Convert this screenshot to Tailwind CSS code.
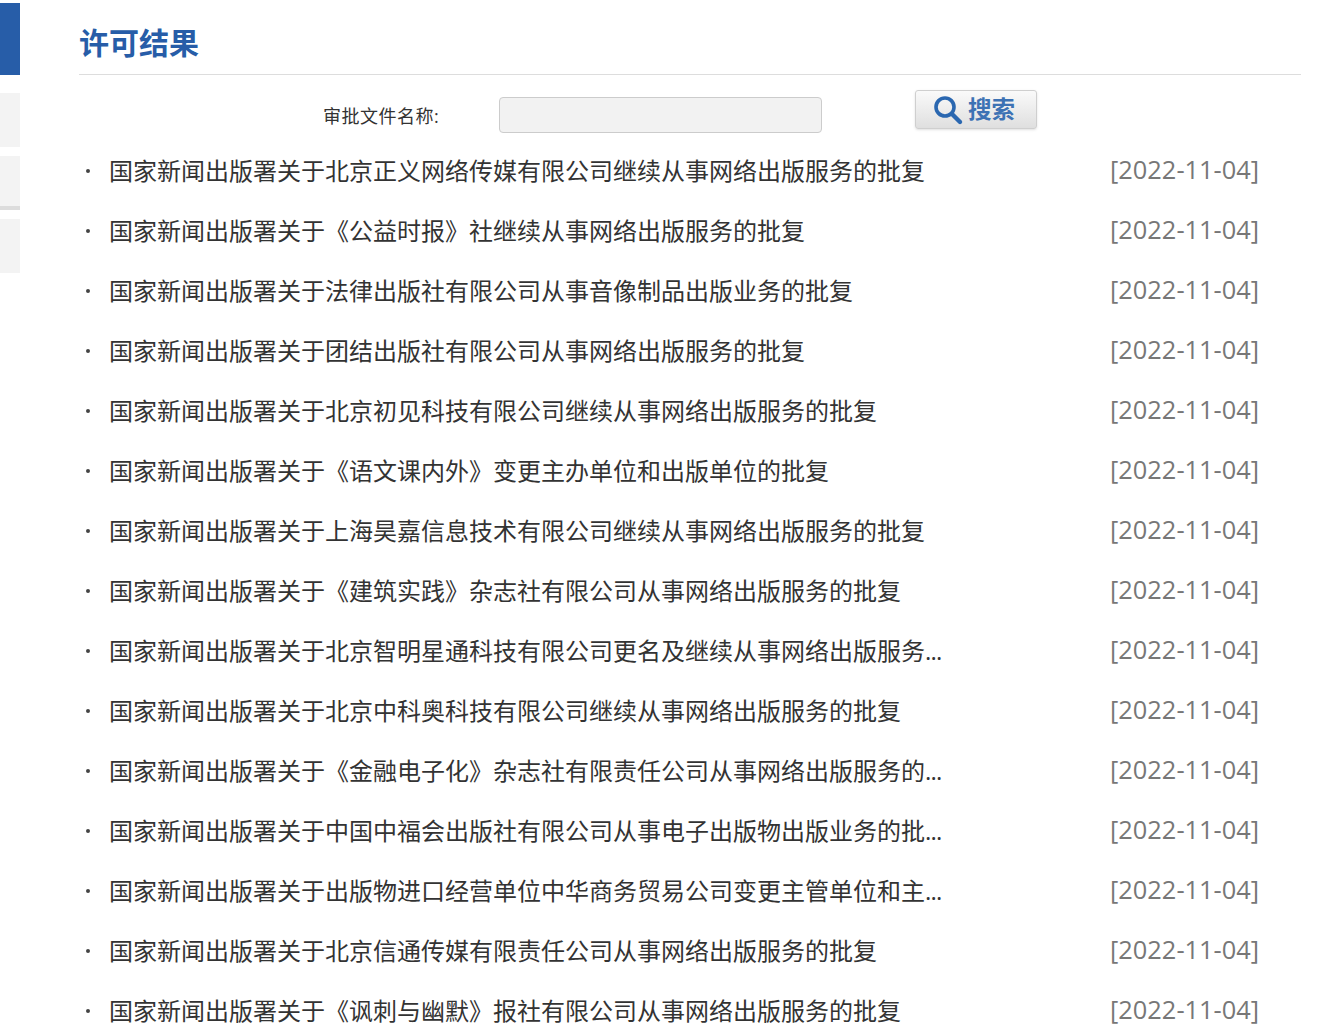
<!DOCTYPE html>
<html lang="zh-CN">
<head>
  <meta charset="UTF-8" />
  <title>许可结果</title>
  <script src="https://cdn.jsdelivr.net/npm/@tailwindcss/browser@4"></script>
</head>
<body class="bg-white h-[1036px] overflow-hidden font-['Open_Sans','Noto_Sans_CJK_SC',sans-serif]">
  <div class="flex">
    <!-- Side menu -->
    <div class="w-[20px] shrink-0 pt-[3px]">
      <div class="h-[72px] bg-[#275da8]"></div>
      <div class="h-[54px] mt-[18px] bg-[#f3f3f3]"></div>
      <div class="h-[54px] mt-[9px] bg-[#f3f3f3] border-b-[4px] border-[#dcdcdc]"></div>
      <div class="h-[54px] mt-[9px] bg-[#f3f3f3]"></div>
    </div>

    <div class="w-[1222px] ml-[59px]">
      <div class="h-[75px] border-b border-[#dddddd] flex items-center pt-[12px]">
        <h1 class="text-[30px] font-bold text-[#275da8] leading-none">许可结果</h1>
      </div>

      <!-- Search -->
      <div class="h-[66px] flex items-start">
        <label class="ml-[244px] mt-[28px] w-[176px] text-[18px] leading-[26px] text-[#333333] tracking-[0.5px]">审批文件名称:</label>
        <input type="text" class="mt-[22px] w-[323px] h-[36px] bg-[#f2f2f2] border border-[#cccccc] rounded-[4px]" />
        <button class="ml-[93px] mt-[15px] w-[122px] h-[39px] flex items-center pl-[16px] gap-[4px] rounded-[3px] border border-[#cfcfcf] bg-gradient-to-b from-[#fafafa] to-[#dfdfdf] shadow-sm">
          <svg width="32" height="32" viewBox="0 0 32 32" fill="none" stroke="#2a67b0">
            <circle cx="13" cy="13" r="9" stroke-width="3.6" />
            <path d="M20 20 L28 28" stroke-width="4.4" stroke-linecap="round" />
          </svg>
          <span class="text-[23.5px] font-bold text-[#3d72b4] leading-none">搜索</span>
        </button>
      </div>

      <!-- List -->
      <ul class="text-[24px]">
        <li class="h-[60px] flex items-center"><span class="w-[30px] flex pl-[7px]"><i class="size-[4px] rounded-full bg-[#444444]"></i></span><span class="w-[1001px] text-[#333333]"><span class="block w-[840px] truncate">国家新闻出版署关于北京正义网络传媒有限公司继续从事网络出版服务的批复</span></span><span class="text-[#777777] text-[25.4px] -translate-y-[2px]">[2022-11-04]</span></li>
        <li class="h-[60px] flex items-center"><span class="w-[30px] flex pl-[7px]"><i class="size-[4px] rounded-full bg-[#444444]"></i></span><span class="w-[1001px] text-[#333333]"><span class="block w-[840px] truncate">国家新闻出版署关于《公益时报》社继续从事网络出版服务的批复</span></span><span class="text-[#777777] text-[25.4px] -translate-y-[2px]">[2022-11-04]</span></li>
        <li class="h-[60px] flex items-center"><span class="w-[30px] flex pl-[7px]"><i class="size-[4px] rounded-full bg-[#444444]"></i></span><span class="w-[1001px] text-[#333333]"><span class="block w-[840px] truncate">国家新闻出版署关于法律出版社有限公司从事音像制品出版业务的批复</span></span><span class="text-[#777777] text-[25.4px] -translate-y-[2px]">[2022-11-04]</span></li>
        <li class="h-[60px] flex items-center"><span class="w-[30px] flex pl-[7px]"><i class="size-[4px] rounded-full bg-[#444444]"></i></span><span class="w-[1001px] text-[#333333]"><span class="block w-[840px] truncate">国家新闻出版署关于团结出版社有限公司从事网络出版服务的批复</span></span><span class="text-[#777777] text-[25.4px] -translate-y-[2px]">[2022-11-04]</span></li>
        <li class="h-[60px] flex items-center"><span class="w-[30px] flex pl-[7px]"><i class="size-[4px] rounded-full bg-[#444444]"></i></span><span class="w-[1001px] text-[#333333]"><span class="block w-[840px] truncate">国家新闻出版署关于北京初见科技有限公司继续从事网络出版服务的批复</span></span><span class="text-[#777777] text-[25.4px] -translate-y-[2px]">[2022-11-04]</span></li>
        <li class="h-[60px] flex items-center"><span class="w-[30px] flex pl-[7px]"><i class="size-[4px] rounded-full bg-[#444444]"></i></span><span class="w-[1001px] text-[#333333]"><span class="block w-[840px] truncate">国家新闻出版署关于《语文课内外》变更主办单位和出版单位的批复</span></span><span class="text-[#777777] text-[25.4px] -translate-y-[2px]">[2022-11-04]</span></li>
        <li class="h-[60px] flex items-center"><span class="w-[30px] flex pl-[7px]"><i class="size-[4px] rounded-full bg-[#444444]"></i></span><span class="w-[1001px] text-[#333333]"><span class="block w-[840px] truncate">国家新闻出版署关于上海昊嘉信息技术有限公司继续从事网络出版服务的批复</span></span><span class="text-[#777777] text-[25.4px] -translate-y-[2px]">[2022-11-04]</span></li>
        <li class="h-[60px] flex items-center"><span class="w-[30px] flex pl-[7px]"><i class="size-[4px] rounded-full bg-[#444444]"></i></span><span class="w-[1001px] text-[#333333]"><span class="block w-[840px] truncate">国家新闻出版署关于《建筑实践》杂志社有限公司从事网络出版服务的批复</span></span><span class="text-[#777777] text-[25.4px] -translate-y-[2px]">[2022-11-04]</span></li>
        <li class="h-[60px] flex items-center"><span class="w-[30px] flex pl-[7px]"><i class="size-[4px] rounded-full bg-[#444444]"></i></span><span class="w-[1001px] text-[#333333]"><span class="block w-[840px] truncate">国家新闻出版署关于北京智明星通科技有限公司更名及继续从事网络出版服务<span class="tracking-[-0.8px]">...</span></span></span><span class="text-[#777777] text-[25.4px] -translate-y-[2px]">[2022-11-04]</span></li>
        <li class="h-[60px] flex items-center"><span class="w-[30px] flex pl-[7px]"><i class="size-[4px] rounded-full bg-[#444444]"></i></span><span class="w-[1001px] text-[#333333]"><span class="block w-[840px] truncate">国家新闻出版署关于北京中科奥科技有限公司继续从事网络出版服务的批复</span></span><span class="text-[#777777] text-[25.4px] -translate-y-[2px]">[2022-11-04]</span></li>
        <li class="h-[60px] flex items-center"><span class="w-[30px] flex pl-[7px]"><i class="size-[4px] rounded-full bg-[#444444]"></i></span><span class="w-[1001px] text-[#333333]"><span class="block w-[840px] truncate">国家新闻出版署关于《金融电子化》杂志社有限责任公司从事网络出版服务的<span class="tracking-[-0.8px]">...</span></span></span><span class="text-[#777777] text-[25.4px] -translate-y-[2px]">[2022-11-04]</span></li>
        <li class="h-[60px] flex items-center"><span class="w-[30px] flex pl-[7px]"><i class="size-[4px] rounded-full bg-[#444444]"></i></span><span class="w-[1001px] text-[#333333]"><span class="block w-[840px] truncate">国家新闻出版署关于中国中福会出版社有限公司从事电子出版物出版业务的批<span class="tracking-[-0.8px]">...</span></span></span><span class="text-[#777777] text-[25.4px] -translate-y-[2px]">[2022-11-04]</span></li>
        <li class="h-[60px] flex items-center"><span class="w-[30px] flex pl-[7px]"><i class="size-[4px] rounded-full bg-[#444444]"></i></span><span class="w-[1001px] text-[#333333]"><span class="block w-[840px] truncate">国家新闻出版署关于出版物进口经营单位中华商务贸易公司变更主管单位和主<span class="tracking-[-0.8px]">...</span></span></span><span class="text-[#777777] text-[25.4px] -translate-y-[2px]">[2022-11-04]</span></li>
        <li class="h-[60px] flex items-center"><span class="w-[30px] flex pl-[7px]"><i class="size-[4px] rounded-full bg-[#444444]"></i></span><span class="w-[1001px] text-[#333333]"><span class="block w-[840px] truncate">国家新闻出版署关于北京信通传媒有限责任公司从事网络出版服务的批复</span></span><span class="text-[#777777] text-[25.4px] -translate-y-[2px]">[2022-11-04]</span></li>
        <li class="h-[60px] flex items-center"><span class="w-[30px] flex pl-[7px]"><i class="size-[4px] rounded-full bg-[#444444]"></i></span><span class="w-[1001px] text-[#333333]"><span class="block w-[840px] truncate">国家新闻出版署关于《讽刺与幽默》报社有限公司从事网络出版服务的批复</span></span><span class="text-[#777777] text-[25.4px] -translate-y-[2px]">[2022-11-04]</span></li>
      </ul>
    </div>
  </div>
</body>
</html>
